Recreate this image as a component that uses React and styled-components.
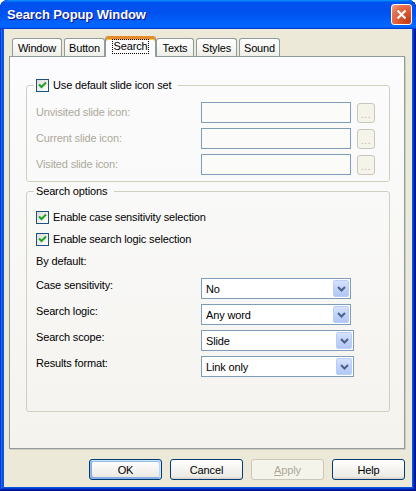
import React from 'react';
import styled, { createGlobalStyle } from 'styled-components';

const GlobalStyle = createGlobalStyle`
  html, body {
    margin: 0;
    padding: 0;
    background: #fff;
  }
  body {
    font-family: "Liberation Sans", Arial, sans-serif;
    font-size: 11px;
    letter-spacing: -0.15px;
    color: #000;
  }
`;

const Window = styled.div`
  width: 416px;
  height: 491px;
  box-sizing: border-box;
  display: flex;
  flex-direction: column;
  padding: 0 4px 4px;
  border-radius: 8px 8px 0 0;
  overflow: hidden;
  background: #0855dd;
  box-shadow: inset -1px -1px #00138c, inset 1px 1px #0831d9,
    inset -2px -2px #001ea0, inset 2px 2px #166aee,
    inset -3px -3px #003bda, inset 3px 3px #0855dd;
`;

const TitleBar = styled.div`
  height: 29px;
  margin: 0 -4px;
  flex: none;
  display: flex;
  align-items: center;
  justify-content: space-between;
  padding: 0 4px 0 7px;
  border-radius: 8px 8px 0 0;
  background: linear-gradient(180deg, #0997ff, #0053ee 8%, #0050ee 40%, #06f 88%, #06f 93%, #005bff 95%, #003dd7 96%, #003dd7);
`;

const Title = styled.span`
  font-family: "Liberation Sans", Arial, sans-serif;
  font-weight: bold;
  font-size: 13px;
  color: #fff;
  text-shadow: 1px 1px #0f1089;
  letter-spacing: -0.1px;
`;

const CloseButton = styled.div`
  width: 21px;
  height: 21px;
  box-sizing: border-box;
  border: 1px solid #fff;
  border-radius: 3px;
  display: flex;
  align-items: center;
  justify-content: center;
  background: radial-gradient(circle at 85% 85%, #c43b14 0, #de5a33 45%, #e4704c 70%, #f3a88f 100%);
`;

const Client = styled.div`
  flex: 1;
  display: flex;
  flex-direction: column;
  background: #ece9d8;
  padding: 7px 7px 7px 5px;
`;

const TabStrip = styled.div`
  height: 20px;
  display: flex;
  align-items: flex-end;
  padding-left: 2px;
  position: relative;
  z-index: 1;
`;

const Tab = styled.div`
  box-sizing: border-box;
  width: ${p => p.w}px;
  height: ${p => (p.active ? 21 : 18)}px;
  margin: ${p => (p.active ? '0 -1px -1px -1px' : '0 1px 0 1px')};
  display: flex;
  align-items: center;
  justify-content: center;
  padding-bottom: ${p => (p.active ? 2 : 0)}px;
  border: 1px solid #919b9c;
  border-bottom: none;
  border-radius: 3px 3px 0 0;
  background: ${p => (p.active ? '#fcfcfe' : 'linear-gradient(180deg, #fff, #fafaf9 26%, #f0f0ea 95%, #ecebe6)')};
  box-shadow: ${p => (p.active ? 'inset 0 2px #e68b2c, inset 0 3px #ffc73c' : 'none')};
  border-top-color: ${p => (p.active ? '#e68b2c' : '#919b9c')};
`;

const FocusText = styled.span`
  outline: 1px dotted #000;
  outline-offset: 0;
  padding: 0 1px;
  line-height: 13px;
`;

const Panel = styled.div`
  height: 393px;
  box-sizing: border-box;
  border: 1px solid #919b9c;
  background: linear-gradient(180deg, #fcfcfe, #f4f3ee);
  box-shadow: 1px 1px 0 #d0cebf;
  padding: 22px 14px 0 16px;
`;

const Group = styled.fieldset`
  width: 364px;
  box-sizing: border-box;
  margin: ${p => p.mt || 0}px 0 0 0;
  padding: ${p => p.pt}px 0 ${p => p.pb}px 9px;
  border: 1px solid #d0d0bf;
  border-radius: 3px;
  min-width: 0;
`;

const Legend = styled.legend`
  display: flex;
  align-items: center;
  gap: 4px;
  height: 13px;
  line-height: 13px;
  margin-left: -2px;
  padding: 0 7px 0 2px;
`;

const FieldRow = styled.div`
  display: flex;
  align-items: center;
  height: 21px;
  & + & {
    margin-top: 5px;
  }
`;

const Label = styled.span`
  width: 165px;
  flex: none;
  color: ${p => (p.disabled ? '#aca899' : '#000')};
  align-self: ${p => (p.top ? 'flex-start' : 'center')};
  padding-top: ${p => (p.top ? 1 : 0)}px;
  line-height: 13px;
`;

const TextBox = styled.div`
  width: 150px;
  height: 21px;
  box-sizing: border-box;
  border: 1px solid #7f9db9;
  background: #fbfbf9;
`;

const BrowseButton = styled.div`
  width: 18px;
  height: 20px;
  box-sizing: border-box;
  margin-left: 6px;
  border: 1px solid #c9c7ba;
  border-radius: 3px;
  background: #f5f4ea;
  color: #c9a9a9;
  display: flex;
  align-items: center;
  justify-content: center;
  padding-top: 3px;
  font-size: 10px;
  letter-spacing: 0.5px;
`;

const Stack = styled.div`
  display: flex;
  flex-direction: column;
  gap: 9px;
`;

const CheckRow = styled.label`
  display: flex;
  align-items: center;
  gap: 4px;
  height: 13px;
  line-height: 13px;
`;

const Box = styled.span`
  width: 13px;
  height: 13px;
  box-sizing: border-box;
  flex: none;
  border: 1px solid #1c5180;
  background: linear-gradient(135deg, #dcdcd7, #fff);
  display: flex;
  align-items: center;
  justify-content: center;
`;

const PlainText = styled.span`
  line-height: 13px;
`;

const FormGrid = styled.div`
  margin-top: 1px;
`;

const Combo = styled.div`
  width: ${p => p.w}px;
  height: 21px;
  box-sizing: border-box;
  border: 1px solid #7f9db9;
  background: #fff;
  display: flex;
  align-items: center;
  padding: 1px;
`;

const ComboValue = styled.span`
  flex: 1;
  padding-left: 3px;
`;

const ComboArrow = styled.span`
  width: 16px;
  height: 17px;
  box-sizing: border-box;
  border: 1px solid #b9cdf6;
  border-radius: 2px;
  background: linear-gradient(180deg, #d6e2fd, #c1d3fb 50%, #b2c7f6);
  display: flex;
  align-items: center;
  justify-content: center;
`;

const ButtonRow = styled.div`
  display: flex;
  justify-content: flex-end;
  gap: 8px;
  margin-top: 10px;
`;

const Button = styled.div`
  width: 73px;
  height: 21px;
  box-sizing: border-box;
  display: flex;
  align-items: center;
  justify-content: center;
  border: 1px solid ${p => (p.disabled ? '#c9c7ba' : '#003c74')};
  border-radius: 3px;
  color: ${p => (p.disabled ? '#aca899' : '#000')};
  background: ${p => (p.disabled ? '#f5f4ea' : 'linear-gradient(180deg, #fff, #ecebe6 86%, #d6d0c5)')};
  box-shadow: ${p =>
    p.primary
      ? 'inset -1px 1px #cee7ff, inset 1px 2px #98b8ea, inset -2px 2px #bcd4f6, inset 1px -1px #89ade4, inset 2px -2px #89ade4'
      : 'none'};
`;

const Check = () => (
  <Box>
    <svg width="9" height="9" viewBox="0 0 9 9">
      <path d="M1 3.5 L3.5 6 L8 1.5" fill="none" stroke="#21a121" strokeWidth="2" />
    </svg>
  </Box>
);

const Arrow = () => (
  <ComboArrow>
    <svg width="9" height="6" viewBox="0 0 9 6">
      <path d="M1 1 L4.5 4.5 L8 1" fill="none" stroke="#4d6185" strokeWidth="2" />
    </svg>
  </ComboArrow>
);

const tabs = [
  { label: 'Window', w: 50 },
  { label: 'Button', w: 41 },
  { label: 'Search', w: 51, active: true },
  { label: 'Texts', w: 38 },
  { label: 'Styles', w: 41 },
  { label: 'Sound', w: 41 },
];

const iconRows = ['Unvisited slide icon:', 'Current slide icon:', 'Visited slide icon:'];

const combos = [
  { label: 'Case sensitivity:', value: 'No', w: 150 },
  { label: 'Search logic:', value: 'Any word', w: 150 },
  { label: 'Search scope:', value: 'Slide', w: 153 },
  { label: 'Results format:', value: 'Link only', w: 153 },
];

export default function App() {
  return (
    <>
      <GlobalStyle />
      <Window>
        <TitleBar>
          <Title>Search Popup Window</Title>
          <CloseButton>
            <svg width="11" height="11" viewBox="0 0 11 11">
              <path d="M1.5 1.5 L9.5 9.5 M9.5 1.5 L1.5 9.5" stroke="#fff" strokeWidth="2.2" />
            </svg>
          </CloseButton>
        </TitleBar>
        <Client>
          <TabStrip>
            {tabs.map(t => (
              <Tab key={t.label} w={t.w} active={t.active}>
                {t.active ? <FocusText>{t.label}</FocusText> : t.label}
              </Tab>
            ))}
          </TabStrip>
          <Panel>
            <Group pt={10} pb={6}>
              <Legend>
                <Check />
                <span>Use default slide icon set</span>
              </Legend>
              {iconRows.map(r => (
                <FieldRow key={r}>
                  <Label disabled>{r}</Label>
                  <TextBox />
                  <BrowseButton>...</BrowseButton>
                </FieldRow>
              ))}
            </Group>
            <Group mt={3} pt={13} pb={34}>
              <Legend>Search options</Legend>
              <Stack>
                <CheckRow>
                  <Check />
                  <span>Enable case sensitivity selection</span>
                </CheckRow>
                <CheckRow>
                  <Check />
                  <span>Enable search logic selection</span>
                </CheckRow>
                <PlainText>By default:</PlainText>
                <FormGrid>
                  {combos.map(c => (
                    <FieldRow key={c.label}>
                      <Label top>{c.label}</Label>
                      <Combo w={c.w}>
                        <ComboValue>{c.value}</ComboValue>
                        <Arrow />
                      </Combo>
                    </FieldRow>
                  ))}
                </FormGrid>
              </Stack>
            </Group>
          </Panel>
          <ButtonRow>
            <Button primary>OK</Button>
            <Button>Cancel</Button>
            <Button disabled>
              <span><u>A</u>pply</span>
            </Button>
            <Button>Help</Button>
          </ButtonRow>
        </Client>
      </Window>
    </>
  );
}
